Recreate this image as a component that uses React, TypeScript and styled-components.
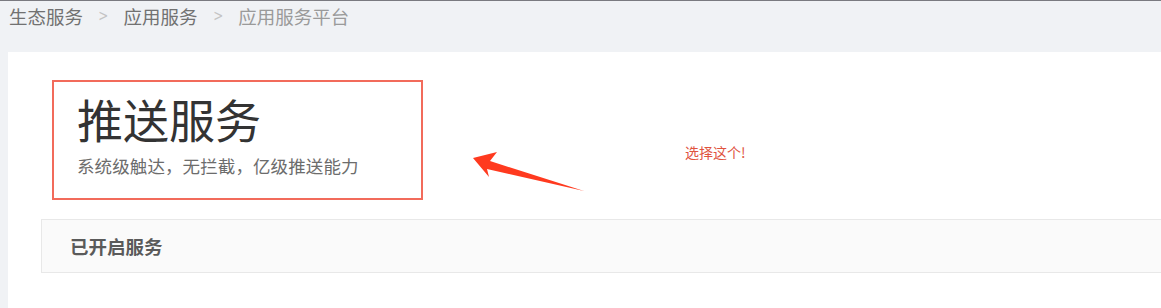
import * as React from "react";
import { styled, createGlobalStyle } from "styled-components";

const GlobalStyle = createGlobalStyle`
  html, body {
    margin: 0;
    padding: 0;
    background: #f0f2f5;
    overflow: hidden;
  }
  body {
    font-family: "Noto Sans CJK SC", "Noto Sans", sans-serif;
    border-top: 1px solid #7a7a80;
  }
`;

const crumbs = ["生态服务", "应用服务", "应用服务平台"];

const App = () => {
  return (
    <>
      <GlobalStyle />
      <Page>
        <Breadcrumb>
          {crumbs.map((c, i) => (
            <React.Fragment key={c}>
              {i > 0 && <Sep>&gt;</Sep>}
              <Crumb $current={i === crumbs.length - 1}>{c}</Crumb>
            </React.Fragment>
          ))}
        </Breadcrumb>

        <Panel>
          <ServiceHeader>
            <Title>推送服务</Title>
            <Subtitle>系统级触达，无拦截，亿级推送能力</Subtitle>
          </ServiceHeader>

          <SectionBar>
            <SectionTitle>已开启服务</SectionTitle>
          </SectionBar>

          {/* annotation: arrow + note over the page */}
          <Arrow viewBox="0 0 120 44" aria-hidden>
            <path d="M0 6 L24 0 L17 9 L111 39 L14 17 L16 25 Z" fill="#ff3a1f" />
          </Arrow>
          <Note>选择这个!</Note>
        </Panel>
      </Page>
    </>
  );
};

export default App;

const Page = styled.div`
  height: 307px;
  display: flex;
  flex-direction: column;
`;

const Breadcrumb = styled.div`
  display: flex;
  align-items: center;
  gap: 14px;
  height: 30px;
  padding: 0 0 0 9px;
  margin-bottom: 21px;
  font-size: 18.5px;
  line-height: 30px;
`;

const Crumb = styled.span<{ $current?: boolean }>`
  color: ${(p) => (p.$current ? "#9a9a9a" : "#717171")};
`;

const Sep = styled.span`
  color: #c4c4c4;
  font-family: "DejaVu Sans", sans-serif;
  font-size: 15px;
  transform: scaleX(0.8);
`;

const Panel = styled.div`
  position: relative;
  flex: 1;
  margin-left: 8px;
  background: #ffffff;
  padding: 28px 0 0 33px;
`;

const ServiceHeader = styled.div`
  box-sizing: border-box;
  width: 371px;
  height: 120px;
  margin-left: 11px;
  border: 2px solid #f26b5b;
  padding: 8px 0 0 23px;
`;

const Title = styled.div`
  font-size: 46px;
  line-height: 56px;
  color: #333333;
`;

const Subtitle = styled.div`
  margin-top: 8px;
  font-size: 17.5px;
  line-height: 24px;
  letter-spacing: 0.1px;
  color: #6c6c6c;
`;

const SectionBar = styled.div`
  display: flex;
  align-items: center;
  height: 52px;
  margin-top: 19px;
  margin-right: -4px;
  padding-left: 28px;
  background: #fafafa;
  border: 1px solid #e8e8e8;
`;

const SectionTitle = styled.div`
  font-size: 18.5px;
  font-weight: 700;
  color: #5a5a5a;
`;

const Arrow = styled.svg`
  position: absolute;
  left: 465px;
  top: 100px;
  width: 120px;
  height: 44px;
`;

const Note = styled.div`
  position: absolute;
  left: 677px;
  top: 91px;
  font-size: 14px;
  line-height: 18px;
  color: #e0543f;
`;
